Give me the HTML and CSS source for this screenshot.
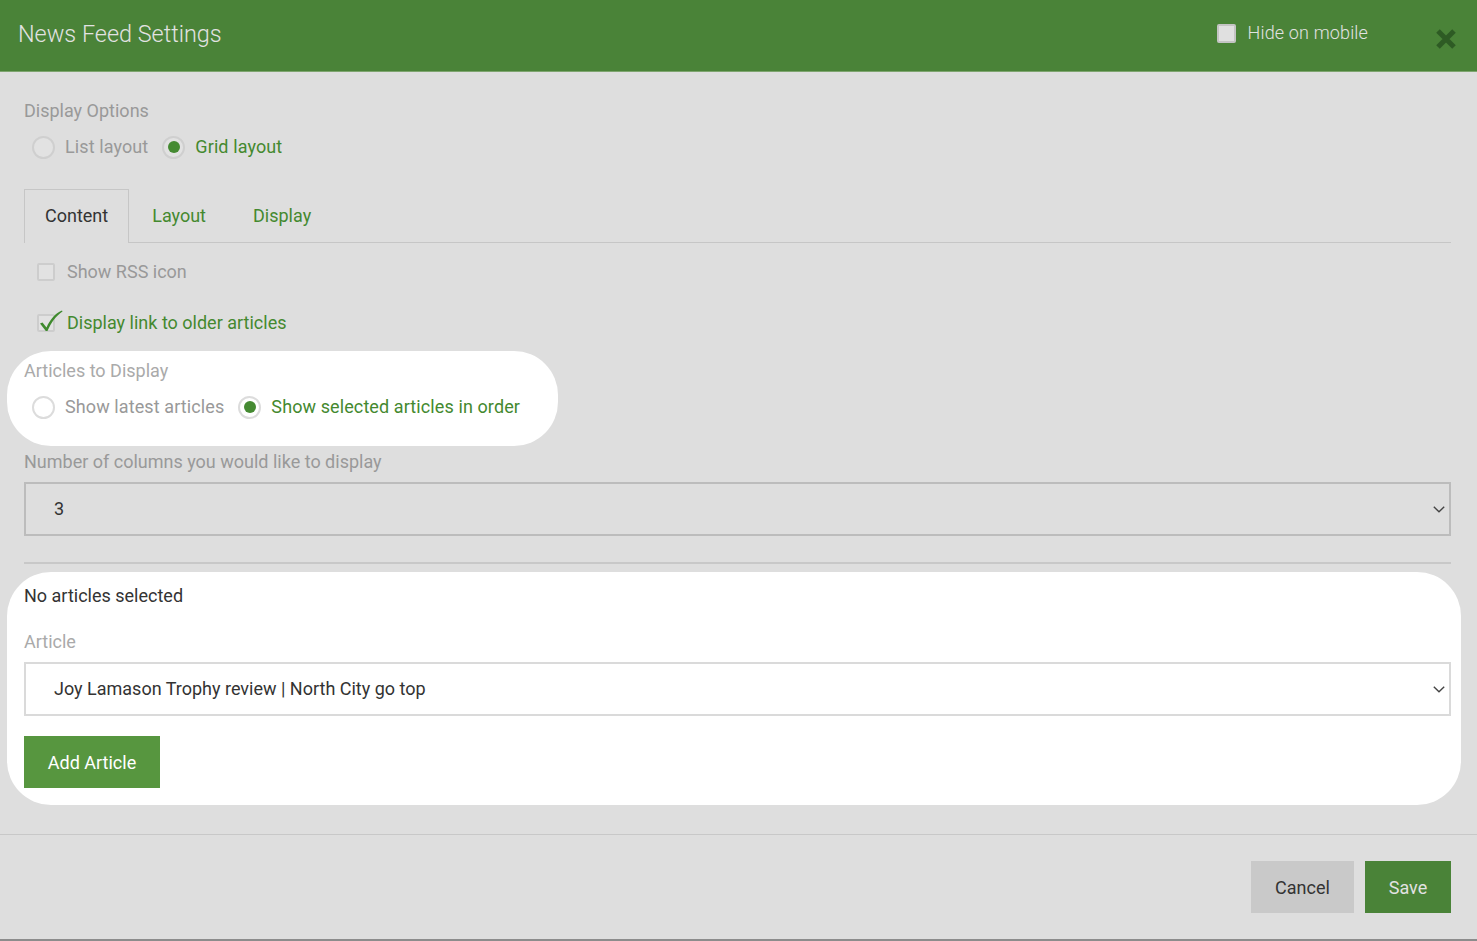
FILE: index.html
```html
<!DOCTYPE html>
<html lang="en">
<head>
    <meta charset="UTF-8">
    <meta name="viewport" content="width=device-width, initial-scale=1.0">
    <title>News Feed Settings</title>
    <link rel="stylesheet" href="styles.css">
</head>
<body>
    <div class="modal">
        <div class="modal-header">
            <h1>News Feed Settings</h1>
            <label class="hide-mobile">
                <span class="box"></span>
                Hide on mobile
            </label>
            <button class="close" aria-label="Close">
                <svg width="22" height="22" viewBox="0 0 22 22">
                    <path d="M3 3 L19 19 M19 3 L3 19" stroke="#2e5b24" stroke-width="5" stroke-linecap="butt"/>
                </svg>
            </button>
        </div>

        <div class="modal-body">
            <div class="label">Display Options</div>
            <div class="radio-row">
                <span class="radio"></span><span class="radio-text">List layout</span>
                <span class="radio checked"></span><span class="radio-text on">Grid layout</span>
            </div>

            <div class="tabs">
                <div class="tab active">Content</div>
                <div class="tab">Layout</div>
                <div class="tab">Display</div>
            </div>

            <div class="check-row first">
                <span class="checkbox"></span>
                <span class="check-text">Show RSS icon</span>
            </div>
            <div class="check-row">
                <span class="checkbox">
                    <svg class="tick" width="26" height="24" viewBox="0 0 26 24">
                        <path d="M1 13.5 L3.5 12.5 L7.5 17.5 C11 9.5 16 3.5 23 0.5 L23.5 1.5 C17 6 12.5 12 8.5 21 L6.8 21 Z" fill="#3f8a2e"/>
                    </svg>
                </span>
                <span class="check-text on">Display link to older articles</span>
            </div>

            <div class="spot spot-small">
                <div class="label light">Articles to Display</div>
                <div class="radio-row">
                    <span class="radio white"></span><span class="radio-text">Show latest articles</span>
                    <span class="radio white checked"></span><span class="radio-text on">Show selected articles in order</span>
                </div>
            </div>

            <div class="label cols-label">Number of columns you would like to display</div>
            <div class="select">
                <span>3</span>
                <svg class="chevron" width="12" height="7" viewBox="0 0 12 7">
                    <path d="M0.8 0.8 L6 5.8 L11.2 0.8" fill="none" stroke="#444" stroke-width="1.4"/>
                </svg>
            </div>

            <div class="divider"></div>

            <div class="spot spot-wide">
                <div class="none-selected">No articles selected</div>
                <div class="label light article-label">Article</div>
                <div class="select white">
                    <span>Joy Lamason Trophy review | North City go top</span>
                    <svg class="chevron" width="12" height="7" viewBox="0 0 12 7">
                        <path d="M0.8 0.8 L6 5.8 L11.2 0.8" fill="none" stroke="#444" stroke-width="1.4"/>
                    </svg>
                </div>
                <button class="btn btn-add">Add Article</button>
            </div>
        </div>

        <div class="modal-footer">
            <button class="btn btn-cancel">Cancel</button>
            <button class="btn btn-save">Save</button>
        </div>
    </div>
</body>
</html>
```

FILE: styles.css
```css
* {
    margin: 0;
    padding: 0;
    box-sizing: border-box;
}

html, body {
    background: #8c8c8c;
}

body {
    font-family: Roboto, "Liberation Sans", sans-serif;
    font-size: 18px;
    line-height: 24px;
    color: #333;
}

.modal {
    width: 1477px;
    height: 939px;
    background: #dedede;
    display: flex;
    flex-direction: column;
}

/* header */
.modal-header {
    height: 72px;
    background: #4a8338;
    border-bottom: 1px solid #7ea56f;
    display: flex;
    align-items: center;
    padding: 0 20px 0 18px;
}

.modal-header h1 {
    flex: 1;
    font-size: 23.4px;
    font-weight: 300;
    color: #e2e2e2;
    margin-top: -4px;
}

.hide-mobile {
    display: flex;
    align-items: center;
    color: #e2e2e2;
    font-size: 18px;
    font-weight: 300;
    letter-spacing: 0.15px;
    margin-top: -5px;
}

.hide-mobile .box {
    width: 19px;
    height: 19px;
    background: #e0e0e0;
    border: 2px solid #c4c4c4;
    border-radius: 2px;
    margin-right: 12px;
}

.close {
    background: none;
    border: none;
    margin-left: 67px;
    margin-top: 6px;
    display: flex;
}

/* body */
.modal-body {
    padding: 27px 26px 0 24px;
}

.label {
    color: #999;
}

.label.light {
    color: #aaa;
}

.radio-row {
    display: flex;
    align-items: center;
    margin-top: 12px;
    padding-left: 8px;
}

.radio {
    width: 23px;
    height: 23px;
    border-radius: 50%;
    border: 2px solid #cfcfcf;
    background: #e2e2e2;
    display: flex;
    align-items: center;
    justify-content: center;
}

.radio.white {
    background: #fff;
    border-color: #dcdcdc;
}

.radio.checked::after {
    content: "";
    width: 12px;
    height: 12px;
    border-radius: 50%;
    background: #458a32;
}

.radio-text {
    color: #999;
    margin: 0 14px 0 10px;
    letter-spacing: 0.1px;
}

.radio-text.on {
    color: #44892f;
    margin-left: 10px;
}

/* tabs */
.tabs {
    display: flex;
    margin-top: 30px;
    border-bottom: 1px solid #c6c6c6;
    height: 54px;
}

.tab {
    padding: 0 23px 0 22px;
    line-height: 52px;
    color: #44892f;
    border: 1px solid transparent;
    border-bottom: none;
}

.tab.active {
    color: #333;
    border-color: #c6c6c6;
    background: #dedede;
    margin-bottom: -1px;
    padding: 0 20px;
}

/* checkboxes */
.check-row {
    display: flex;
    align-items: center;
    margin-top: 27px;
    padding-left: 13px;
}

.check-row.first {
    margin-top: 17px;
}

.checkbox {
    position: relative;
    width: 18px;
    height: 18px;
    border: 2px solid #cdcdcd;
    border-radius: 2px;
    background: #e2e2e2;
    margin-right: 12px;
}

.tick {
    position: absolute;
    left: 0;
    top: -6px;
}

.check-text {
    color: #999;
}

.check-text.on {
    color: #44892f;
}

/* highlighted areas */
.spot {
    background: #fff;
}

.spot-small {
    display: inline-block;
    margin: 16px 0 0 -17px;
    padding: 8px 24px 27px 17px;
    border-radius: 44px;
}

.cols-label {
    margin-top: 4px;
}

.select {
    height: 54px;
    margin-top: 8px;
    border: 2px solid #bcbcbc;
    display: flex;
    align-items: center;
    justify-content: space-between;
    padding: 0 4px 0 28px;
    color: #333;
}

.select.white {
    background: #fff;
    border-color: #dadada;
}

.divider {
    height: 2px;
    background: #c8c8c8;
    margin-top: 26px;
}

.spot-wide {
    margin: 8px -10px 0 -17px;
    padding: 12px 10px 17px 17px;
    border-radius: 44px;
}

.article-label {
    margin-top: 22px;
}

.btn {
    border: none;
    font-family: Roboto, "Liberation Sans", sans-serif;
    font-size: 18px;
    height: 52px;
    padding: 0 23px;
    cursor: pointer;
}

.btn-add {
    margin-top: 20px;
    background: #57963f;
    color: #fff;
    width: 136px;
}

/* footer */
.modal-footer {
    margin-top: 29px;
    border-top: 1px solid #c8c8c8;
    padding: 26px 26px 0 0;
    display: flex;
    justify-content: flex-end;
    gap: 11px;
}

.btn-cancel {
    background: #c9c9c9;
    color: #333;
    width: 103px;
}

.btn-save {
    background: #4a8338;
    color: #e2e2e2;
    width: 86px;
}
```
